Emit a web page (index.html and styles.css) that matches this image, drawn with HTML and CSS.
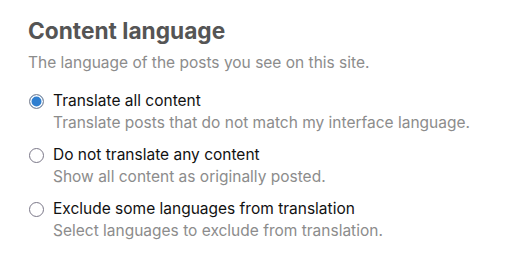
FILE: index.html
```html
<!DOCTYPE html>
<html lang="en">
<head>
    <meta charset="UTF-8">
    <meta name="viewport" content="width=device-width, initial-scale=1.0">
    <title>Content language</title>
    <link rel="stylesheet" href="styles.css">
</head>
<body>
    <div class="section">
        <h1>Content language</h1>
        <p class="subtitle">The language of the posts you see on this site.</p>

        <div class="options">
            <label class="option">
                <span class="radio checked"></span>
                <span class="option-text">
                    <span class="option-title">Translate all content</span>
                    <span class="option-desc">Translate posts that do not match my interface language.</span>
                </span>
            </label>
            <label class="option">
                <span class="radio"></span>
                <span class="option-text">
                    <span class="option-title">Do not translate any content</span>
                    <span class="option-desc">Show all content as originally posted.</span>
                </span>
            </label>
            <label class="option">
                <span class="radio"></span>
                <span class="option-text">
                    <span class="option-title">Exclude some languages from translation</span>
                    <span class="option-desc">Select languages to exclude from translation.</span>
                </span>
            </label>
        </div>
    </div>
</body>
</html>
```

FILE: styles.css
```css
body {
    margin: 0;
    font-family: Inter, "Noto Sans", sans-serif;
    background-color: #ffffff;
}
.section {
    padding: 17px 20px 0 28px;
}
h1 {
    margin: 0;
    font-size: 22.7px;
    line-height: 28px;
    font-weight: 700;
    color: #555555;
}
.subtitle {
    margin: 7px 0 0;
    font-size: 15.5px;
    line-height: 22px;
    color: #8c8c8c;
}
.options {
    display: flex;
    flex-direction: column;
    gap: 10px;
    margin-top: 16px;
}
.option {
    display: flex;
    align-items: flex-start;
    gap: 9px;
    cursor: pointer;
}
.radio {
    flex: none;
    box-sizing: border-box;
    width: 15px;
    height: 15px;
    margin: 4px 0 0 1px;
    border: 1px solid #7a7788;
    border-radius: 50%;
    background-color: #ffffff;
}
.radio.checked {
    border-color: #8e8e96;
    background-color: #2f7fd0;
    box-shadow: inset 0 0 0 1.5px #ffffff;
}
.option-text {
    display: flex;
    flex-direction: column;
}
.option-title {
    font-size: 15.5px;
    line-height: 22px;
    color: #111111;
}
.option-desc {
    font-size: 15.5px;
    line-height: 22px;
    color: #8c8c8c;
}
```
